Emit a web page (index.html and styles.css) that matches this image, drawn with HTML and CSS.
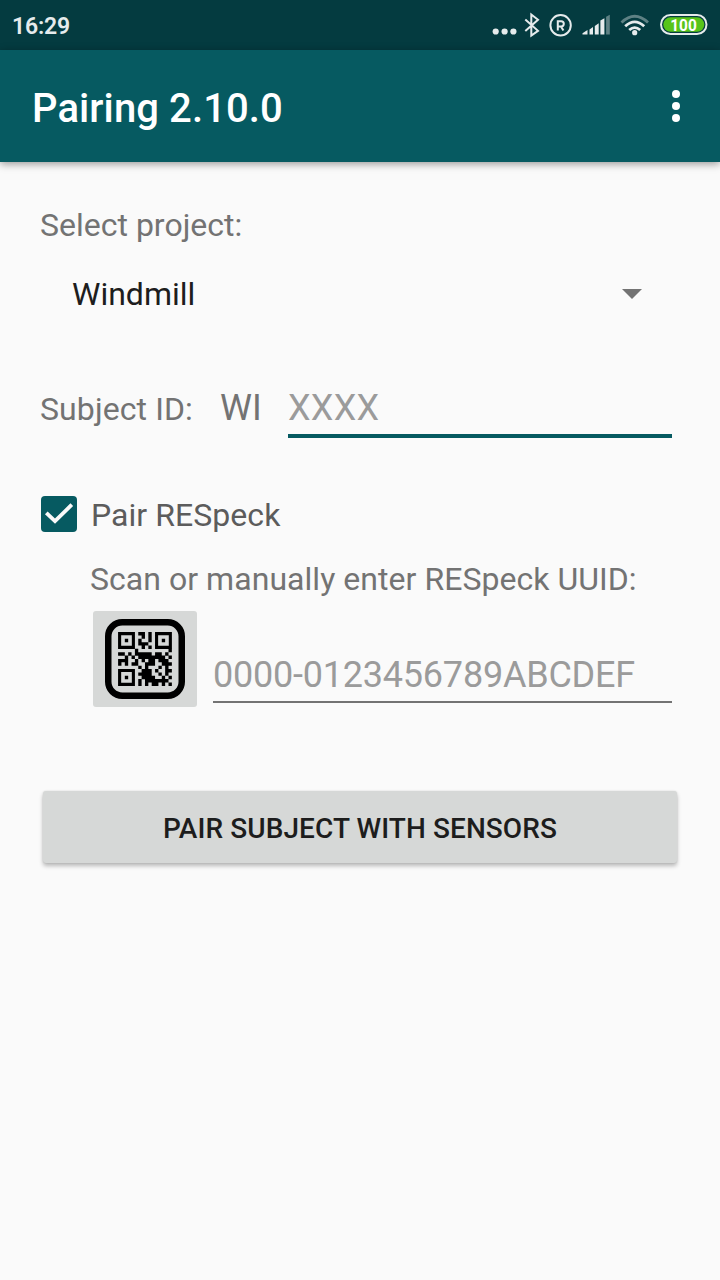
FILE: index.html
```html
<!DOCTYPE html>
<html lang="en">
<head>
<meta charset="utf-8">
<title>Pairing</title>
<link rel="stylesheet" href="styles.css">
</head>
<body>
<header class="status-bar">
  <span class="clock">16:29</span>
  <svg class="status-icons" width="230" height="50" viewBox="490 0 230 50">
    <g fill="#e6ebec">
      <circle cx="495.7" cy="31.5" r="3.1"/><circle cx="504.6" cy="31.5" r="3.1"/><circle cx="513.4" cy="31.5" r="3.1"/>
    </g>
    <path d="M525.3 19.5 L538 30.8 L531.300 35.500 V14.500 L538 19.800 L525.300 31" fill="none" stroke="#e6ebec" stroke-width="2"/>
    <circle cx="560.600" cy="25.300" r="10.200" fill="none" stroke="#e6ebec" stroke-width="2"/>
    <path d="M557.800 30.500 V21.200 H561.200 A2.400 2.400 0 0 1 561.200 26.400 H557.800 M561 26.400 L563.400 30.500" fill="none" stroke="#e6ebec" stroke-width="2"/>
    <g fill="#e6ebec">
      <path d="M582.500 34.500 V33.300 L587.500 30 V34.500Z M589.500 34.500 V29.500 L593 27 V34.500Z M594.800 34.500 V26 L598.700 23.300 V34.500Z M600.400 34.500 V20.500 L604.400 18.300 V34.500Z"/>
      <path d="M606.100 34.500 V16.800 L609.800 14.800 V34.500Z" opacity=".4"/>
    </g>
    <g fill="none" stroke="#e6ebec" stroke-width="2.800">
      <path d="M621.500 22.500 Q634.700 10 648 22.500" opacity=".4"/>
      <path d="M625.200 26.300 Q634.700 17.500 644.200 26.300"/>
      <path d="M629.200 30 Q634.700 25.200 640.200 30"/>
    </g>
    <circle cx="634.700" cy="32.700" r="2.600" fill="#e6ebec"/>
    <rect x="661" y="15" width="45.500" height="19" rx="9.500" fill="none" stroke="#e6ebec" stroke-width="2"/>
    <rect x="663.300" y="17.300" width="41" height="14.500" rx="7.250" fill="#57c41a"/>
    <text class="battery-level" x="683.500" y="31" text-anchor="middle" textLength="26.500" lengthAdjust="spacingAndGlyphs">100</text>
  </svg>
</header>
<div class="toolbar">
  <h1 class="title">Pairing 2.10.0</h1>
  <svg class="menu" width="8" height="32" viewBox="0 0 8 32" fill="#fff">
    <circle cx="4" cy="4" r="4"/><circle cx="4" cy="16" r="4"/><circle cx="4" cy="28" r="4"/>
  </svg>
</div>
<main class="content">
  <div class="label">Select project:</div>
  <div class="spinner">
    <span>Windmill</span>
    <svg width="20" height="10" viewBox="0 0 20 10"><path d="M0 0H20L10 10Z" fill="#737373"/></svg>
  </div>
  <div class="subject">
    <span class="subject-label">Subject ID:</span>
    <span class="prefix">WI</span>
    <div class="field focused">XXXX</div>
  </div>
  <div class="check-row">
    <svg width="36" height="36" viewBox="0 0 36 36"><rect width="36" height="36" rx="4" fill="#065a61"/><path d="M5.300 16.800 L14 25.200 L30.800 8.700" fill="none" stroke="#fafafa" stroke-width="3.800"/></svg>
    <span class="check-label">Pair RESpeck</span>
  </div>
  <div class="scan-label">Scan or manually enter RESpeck UUID:</div>
  <div class="uuid-row">
    <div class="scan-button">
      <svg width="80" height="80" viewBox="0 0 80 80">
        <rect x="3.250" y="3.250" width="73.500" height="73.500" rx="14" fill="none" stroke="#000" stroke-width="6.500"/>
        <g transform="translate(13.100 13.100) scale(3.360)">
          <path fill="none" stroke="#000" stroke-width=".92" d="M.45 .45h4.100v4.100h-4.100z M11.450 .45h4.100v4.100h-4.100z M.45 11.450h4.100v4.100h-4.100z"/>
          <path d="M2 2h1v1h-1z M13 2h1v1h-1z M2 13h1v1h-1z"/>
          <path fill="none" stroke="#000" stroke-width="1.020" d="M6 .5h2 M9 .5h1
            M7 1.500h1 M9 1.500h1
            M6 2.500h1 M9 2.500h1
            M6 3.500h3
            M7 4.500h1 M9 4.500h1
            M5 5.500h1 M15 5.500h1
            M0 6.500h2 M3 6.500h1 M5 6.500h5 M11 6.500h2 M14 6.500h1
            M2 7.500h1 M4 7.500h1 M6 7.500h8 M15 7.500h1
            M0 8.500h3 M5 8.500h1 M7 8.500h1 M9 8.500h2 M12 8.500h3
            M0 9.500h1 M2 9.500h1 M4 9.500h2 M8 9.500h3 M13 9.500h3
            M6 10.500h1 M8 10.500h1 M12 10.500h1 M14 10.500h1
            M7 11.500h3 M11 11.500h1 M14 11.500h2
            M6 12.500h4 M12 12.500h1 M14 12.500h1
            M7 13.500h4 M13 13.500h1 M15 13.500h1
            M6 14.500h1 M8 14.500h3 M11 14.500h4
            M6 15.500h1 M8 15.500h1 M10 15.500h2 M13 15.500h1 M15 15.500h1"/>
        </g>
      </svg>
    </div>
    <div class="field uuid">0000-0123456789ABCDEF</div>
  </div>
  <div class="pair-button">PAIR SUBJECT WITH SENSORS</div>
</main>
</body>
</html>
```
FILE: styles.css
```css
* { box-sizing: border-box; }
body {
  margin: 0;
  min-height: 1280px;
  background: #fafafa;
  color: #737373;
  font: 32px/38px Roboto, sans-serif;
}
.status-bar {
  display: flex;
  justify-content: space-between;
  height: 50px;
  padding-left: 12px;
  background: #043b40;
}
.clock { color: #e6ebec; font-size: 23px; font-weight: 600; line-height: 54px; letter-spacing: -.15px; }
.battery-level { fill: #fff; font-size: 17px; font-weight: 700; }
.toolbar {
  display: flex;
  justify-content: space-between;
  height: 112px;
  padding: 0 40px 0 32px;
  background: #065a61;
  box-shadow: 0 2px 8px rgba(0, 0, 0, .4);
}
.title { margin: 0; color: #fff; font-size: 40px; font-weight: 500; line-height: 118px; letter-spacing: .1px; }
.menu { margin-top: 40px; }
.content { padding: 44px 43px 0 40px; }
.spinner {
  display: flex;
  align-items: center;
  justify-content: space-between;
  margin-top: 31px;
  padding: 0 35px 0 32px;
  color: #1d1d1d;
}
.subject { display: flex; margin: 73px 5px 0 0; height: 52px; }
.subject-label { width: 180px; padding-top: 4px; letter-spacing: .1px; }
.prefix { width: 68px; font-size: 36px; line-height: 42px; padding-top: 1px; }
.field { flex: 1; font-size: 36px; line-height: 42px; color: #9b9b9b; }
.focused { height: 52px; padding-top: 1px; border-bottom: 4px solid #065a61; letter-spacing: .3px; }
.check-row {
  display: flex;
  gap: 14px;
  align-items: center;
  height: 38px;
  margin: 57px 0 0 1px;
  color: #5c5c5c;
}
.check-label { padding-top: 2px; letter-spacing: .05px; }
.scan-label { margin: 27px 0 0 50px; letter-spacing: .04px; }
.uuid-row { display: flex; gap: 16px; margin: 13px 5px 0 53px; }
.scan-button {
  width: 104px;
  height: 96px;
  padding: 8px 12px;
  border-radius: 3px;
  background: #d6d8d7;
}
.scan-button svg { display: block; }
.uuid { height: 92px; padding-top: 43px; border-bottom: 2px solid #737373; letter-spacing: -.22px; }
.pair-button {
  height: 72px;
  margin: 84px 0 0 3px;
  border-radius: 3px;
  background: #d6d8d7;
  color: #1d1d1d;
  box-shadow: 0 3px 4px rgba(0, 0, 0, .26), 0 0 2px rgba(0, 0, 0, .12);
  font-size: 28px;
  font-weight: 500;
  line-height: 76px;
  letter-spacing: .08px;
  text-align: center;
}
```
